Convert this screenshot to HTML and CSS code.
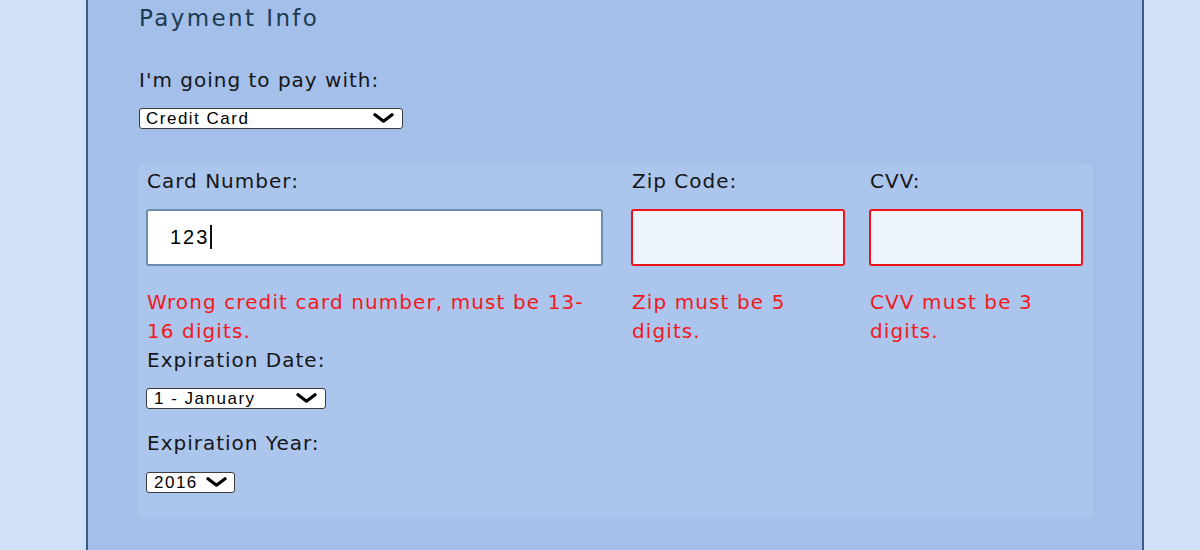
FILE: index.html
```html
<!DOCTYPE html>
<html>
<head>
<meta charset="utf-8">
<link rel="stylesheet" href="styles.css">
</head>
<body>
<div class="page">
  <h2 class="title">Payment Info</h2>
  <label class="label pay-label">I'm going to pay with:</label>
  <span class="select-wrap">
    <select class="sel sel-pay"><option>Credit Card</option></select>
    <svg class="chev" viewBox="0 0 21 10"><path d="M2 1.8 L10.5 8.2 L19 1.8" fill="none" stroke="#000" stroke-width="3.2" stroke-linecap="round" stroke-linejoin="round"/></svg>
  </span>
  <div class="card-box">
    <div class="row">
      <div class="col col-num">
        <label class="label">Card Number:</label>
        <div class="inp-wrap">
          <input class="inp inp-ok" type="text" value="123">
          <span class="caret"></span>
        </div>
        <div class="err">Wrong credit card number, must be 13-16 digits.</div>
      </div>
      <div class="col col-zip">
        <label class="label">Zip Code:</label>
        <input class="inp inp-bad" type="text">
        <div class="err">Zip must be 5 digits.</div>
      </div>
      <div class="col col-cvv">
        <label class="label">CVV:</label>
        <input class="inp inp-bad" type="text">
        <div class="err">CVV must be 3 digits.</div>
      </div>
    </div>
    <label class="label exp-label">Expiration Date:</label>
    <span class="select-wrap">
      <select class="sel sel-month"><option>1 - January</option></select>
      <svg class="chev" viewBox="0 0 21 10"><path d="M2 1.8 L10.5 8.2 L19 1.8" fill="none" stroke="#000" stroke-width="3.2" stroke-linecap="round" stroke-linejoin="round"/></svg>
    </span>
    <label class="label year-label">Expiration Year:</label>
    <span class="select-wrap">
      <select class="sel sel-year"><option>2016</option></select>
      <svg class="chev chev-year" viewBox="0 0 21 10"><path d="M2 1.8 L10.5 8.2 L19 1.8" fill="none" stroke="#000" stroke-width="3.2" stroke-linecap="round" stroke-linejoin="round"/></svg>
    </span>
  </div>
</div>
</body>
</html>
```

FILE: styles.css
```css
html, body {
  margin: 0;
  padding: 0;
}
body {
  background: #d0e0f8;
  font-family: "DejaVu Sans", "Noto Sans", sans-serif;
  color: #161616;
  height: 550px;
  overflow: hidden;
}
.page {
  margin-left: 86px;
  width: 1058px;
  height: 560px;
  box-sizing: border-box;
  background: #a3bfea;
  border-left: 2px solid #3a5f7e;
  border-right: 2px solid #3a5f7e;
  padding: 3px 0 0 51px;
}
.title {
  margin: 0;
  font-size: 23px;
  font-weight: 400;
  line-height: 30px;
  letter-spacing: 2.4px;
  color: #1c3a50;
}
.label {
  display: block;
  font-size: 20px;
  line-height: 28px;
  letter-spacing: 1px;
}
.pay-label {
  margin-top: 33px;
}
.select-wrap {
  position: relative;
  display: block;
  width: max-content;
}
.sel {
  -webkit-appearance: none;
  appearance: none;
  display: block;
  height: 21px;
  box-sizing: border-box;
  border: 1px solid #3c3c3c;
  border-radius: 3px;
  background: #fff;
  font-family: "Liberation Sans", Arial, sans-serif;
  font-size: 17px;
  letter-spacing: 1.5px;
  line-height: 19px;
  color: #000;
  padding: 0 0 0 6px;
  margin: 0;
}
.chev {
  position: absolute;
  top: 5px;
  right: 9px;
  width: 21px;
  height: 10px;
  pointer-events: none;
}
.chev-year {
  right: 8px;
}
.pay-label + .select-wrap {
  margin-top: 14px;
}
.sel-pay { width: 264px; }
.sel-month { width: 180px; padding-left: 7px; }
.sel-year { width: 89px; padding-left: 7px; }
.card-box {
  margin-top: 34px;
  margin-left: -1px;
  width: 955px;
  box-sizing: border-box;
  background: #abc5ed;
  border-radius: 6px;
  padding: 4px 10px 26px 8px;
}
.row {
  display: flex;
}
.col-num { width: 457px; }
.col-zip { width: 214px; margin-left: 28px; }
.col-cvv { width: 214px; margin-left: 24px; }
.col .label {
  padding-left: 1px;
}
.inp-wrap {
  position: relative;
}
.inp {
  display: block;
  box-sizing: border-box;
  width: 100%;
  height: 57px;
  margin: 14px 0 0 0;
  border-radius: 3px;
  font-family: "Liberation Sans", Arial, sans-serif;
  font-size: 20px;
  letter-spacing: 2px;
  padding: 0 0 0 22px;
  color: #000;
  outline: none;
}
.caret {
  position: absolute;
  left: 64px;
  top: 16px;
  width: 1.5px;
  height: 24px;
  background: #111;
}
.inp-ok {
  background: #fff;
  border: 2px solid #6a8fae;
}
.inp-bad {
  background: #edf4fc;
  border: 2px solid #ec1419;
}
.err {
  margin-top: 22px;
  color: #f2191c;
  font-size: 20px;
  line-height: 28.5px;
  letter-spacing: 1.1px;
  padding-left: 1px;
}
.exp-label {
  margin-top: 1px;
  padding-left: 1px;
}
.exp-label + .select-wrap {
  margin-top: 14px;
}
.year-label {
  margin-top: 20px;
  padding-left: 1px;
}
.year-label + .select-wrap {
  margin-top: 15px;
}
```
